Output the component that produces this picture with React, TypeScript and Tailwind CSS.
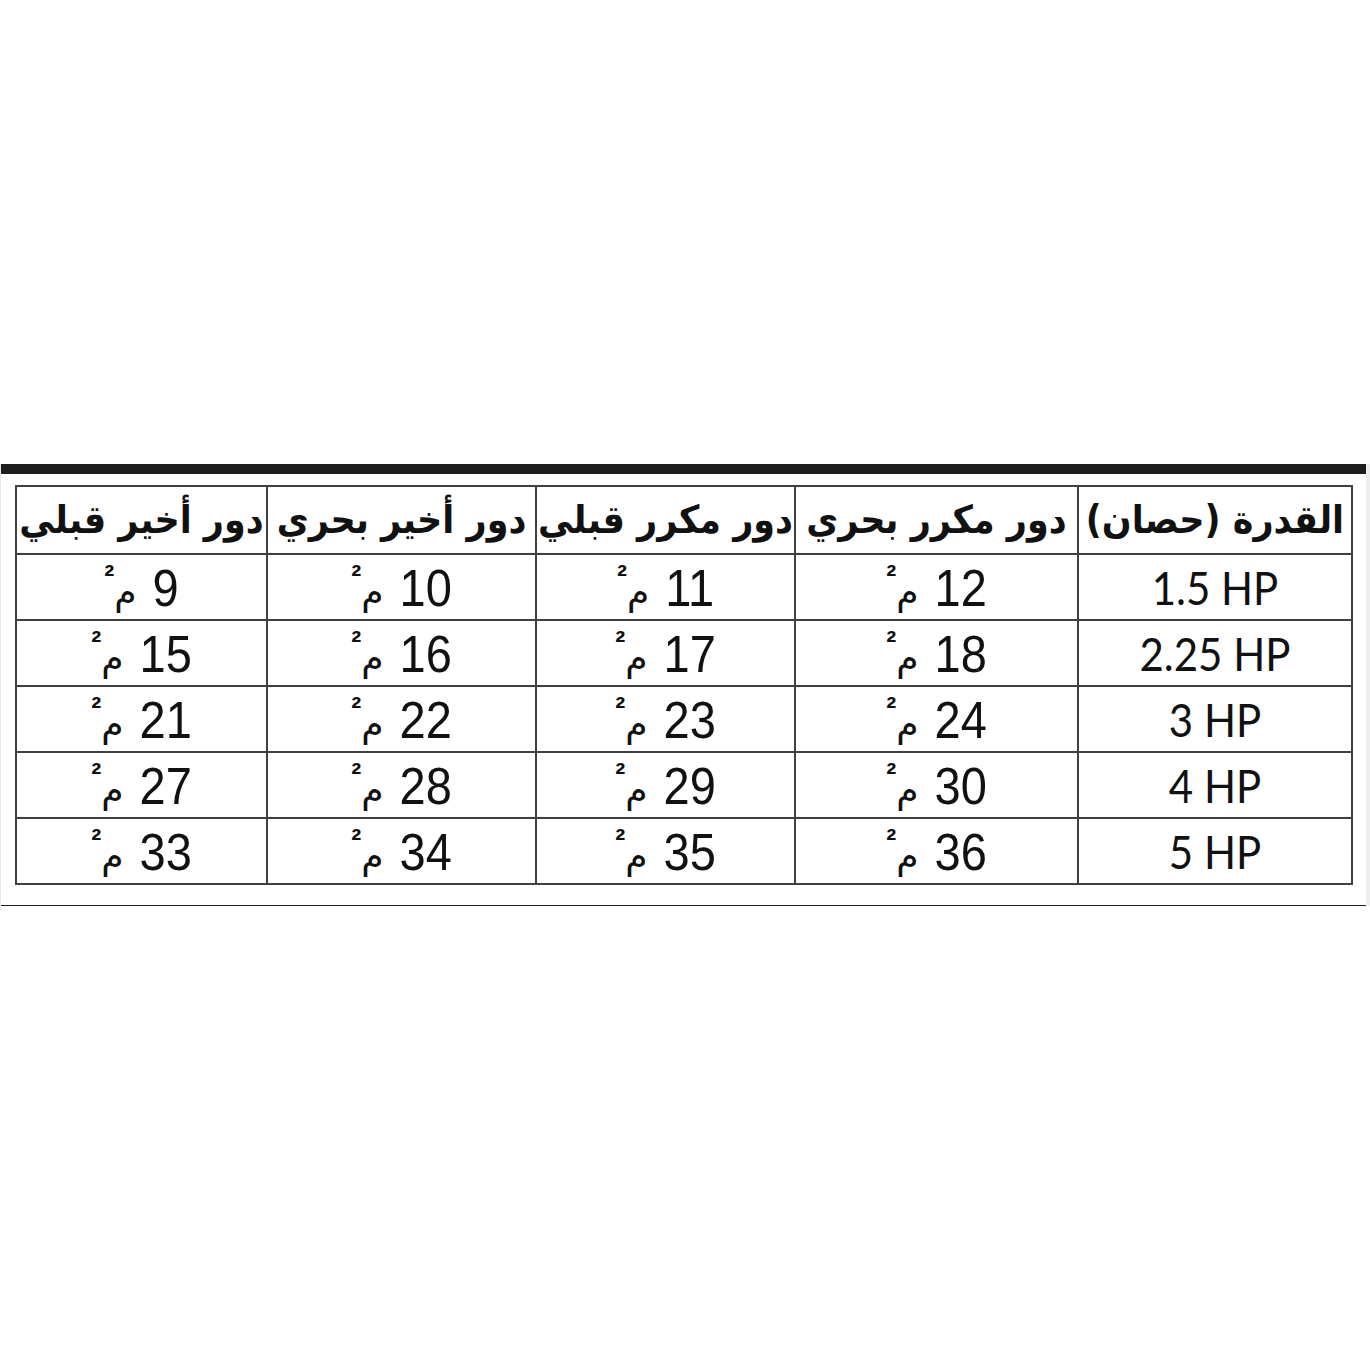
const COLS = ["القدرة (حصان)", "دور مكرر بحري", "دور مكرر قبلي", "دور أخير بحري", "دور أخير قبلي"];
const WIDTHS = ["w-[274px]", "w-[283px]", "w-[259px]", "w-[269px]", "w-[251px]"];

const ROWS = [
    ["1.5 HP", 12, 11, 10, 9],
    ["2.25 HP", 18, 17, 16, 15],
    ["3 HP", 24, 23, 22, 21],
    ["4 HP", 30, 29, 28, 27],
    ["5 HP", 36, 35, 34, 33],
];

function Area({ value }: { value: number }) {
    return (
        <div dir="rtl" className="flex items-start justify-center">
            <span className="inline-block scale-y-110 text-[47px] leading-none font-['Liberation_Sans',Arial,sans-serif] text-[#111]">
                {value}
            </span>
            <span className="mr-[16px] mt-[10px] text-[36px] leading-[36px] font-['DejaVu_Sans',sans-serif] text-[#111]">م</span>
            <span className="mt-[2px] text-[30px] leading-[20px] font-bold font-['Liberation_Sans',Arial,sans-serif] text-[#111]">²</span>
        </div>
    );
}

export default function App() {
    return (
        <div className="w-[1370px] h-[1370px] bg-white">
            <div className="h-[464px]" />
            <div className="flex">
                <div className="w-[1366px] border-l border-l-[#e8e8e8]">
                    <div className="h-[10px] bg-[#1e1e1e]" />
                    <div className="pl-[14px] pt-[11px] pb-[20px] border-b border-b-[#1a1a1a]">
                        <table dir="rtl" className="border-collapse table-fixed w-[1336px]">
                            <thead>
                                <tr className="h-[68px]">
                                    {COLS.map((c, i) => (
                                        <th key={i} className={`${WIDTHS[i]} border-2 border-[#404040] p-0 text-center align-middle`}>
                                            <span className="inline-block scale-y-110 text-[35px] font-bold leading-none text-[#111] font-['DejaVu_Sans',sans-serif]">
                                                {c}
                                            </span>
                                        </th>
                                    ))}
                                </tr>
                            </thead>
                            <tbody>
                                {ROWS.map((r, ri) => (
                                    <tr key={ri} className="h-[66px]">
                                        <td className="border-2 border-[#404040] p-0 text-center align-middle">
                                            <span dir="ltr" className="inline-block scale-y-110 text-[42px] leading-none text-[#111] font-['Lato',sans-serif]">
                                                {r[0]}
                                            </span>
                                        </td>
                                        {r.slice(1).map((v, ci) => (
                                            <td key={ci} className="border-2 border-[#404040] p-0 align-middle">
                                                <Area value={v as number} />
                                            </td>
                                        ))}
                                    </tr>
                                ))}
                            </tbody>
                        </table>
                    </div>
                </div>
                <div className="w-[4px] bg-[#eeeeee]" />
            </div>
        </div>
    );
}
